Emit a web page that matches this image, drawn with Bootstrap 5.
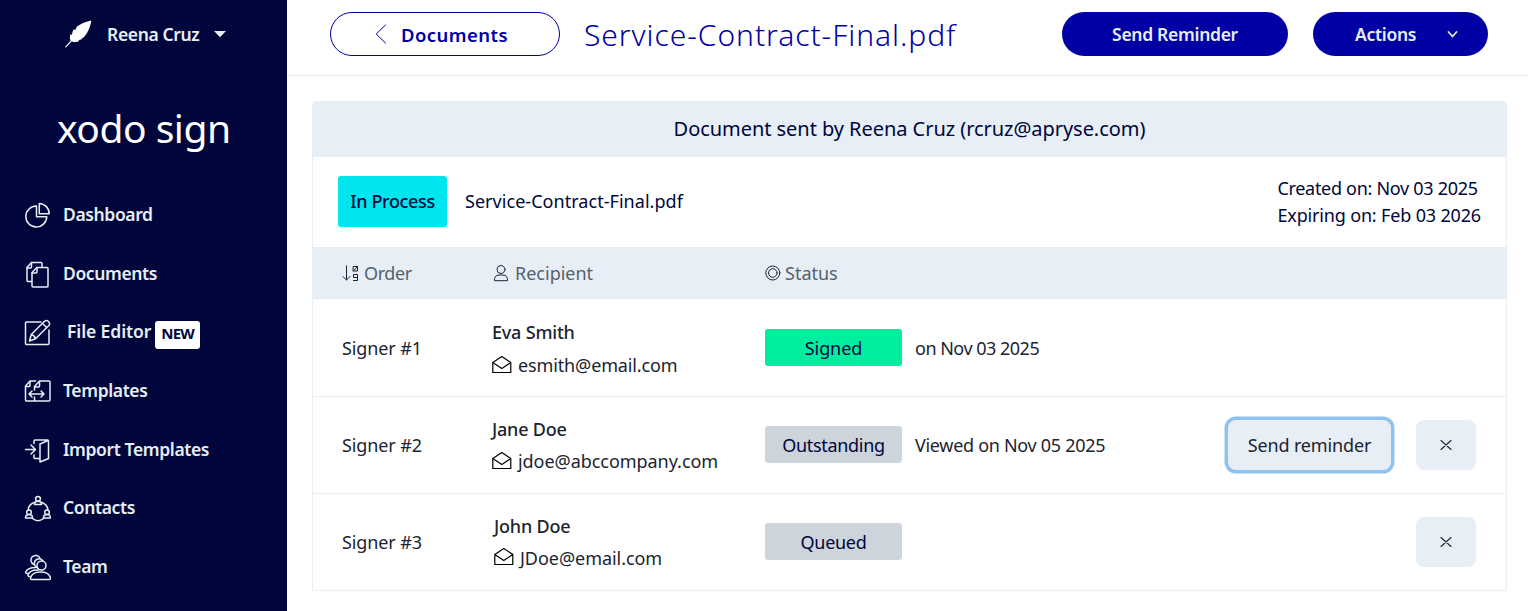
<!DOCTYPE html>
<html lang="en">
<head>
<meta charset="utf-8">
<meta name="viewport" content="width=device-width, initial-scale=1">
<title>Service-Contract-Final.pdf</title>
<link href="https://cdn.jsdelivr.net/npm/bootstrap@5.3.0/dist/css/bootstrap.min.css" rel="stylesheet">
<style>
  :root { --navy: #00063b; --ink: #0000a5; --mist: #e7eef6; }
  body { font-family: "Noto Sans", "Open Sans", sans-serif; font-size: 18px; line-height: 27px; letter-spacing: -.1px; color: #1b2430; background: #fff; white-space: nowrap; }
  svg { display: block; flex: none; fill: none; stroke: currentColor; stroke-linecap: round; stroke-linejoin: round; }
  .fw-mid { font-weight: 500; letter-spacing: -.2px; }
  .side { width: 287px; background: var(--navy); color: #e7eef6; }
  .user-row { height: 68px; padding-left: 64px; font-weight: 600; font-size: 17.5px; letter-spacing: -.36px; }
  .user-name { margin: 0 15px 0 15px; }
  .brand-name { height: 118px; font-size: 39px; line-height: 39px; letter-spacing: -.5px; padding: 40px 0 0 57px; color: #fff; }
  .side .nav-link { height: 58.7px; padding: 0 0 2px 24px; color: inherit; gap: 12px; font-weight: 600; font-size: 17.5px; letter-spacing: -.38px; }
  .side .nav-link svg { width: 27px; height: 27px; stroke-width: 1.5; position: relative; top: 1px; }
  .new-tag { width: 45px; height: 28px; font-size: 15px; line-height: 24px; letter-spacing: -.7px; border-radius: 3px; color: var(--navy); margin: 6px 0 0 -8px; }
  .topbar { height: 76px; border-bottom: 1px solid var(--mist); padding: 12px 40px 19px 43px; }
  .pill { height: 44px; border-radius: 22px; font-size: 17.5px; font-weight: 600; padding: 0; letter-spacing: -.3px; line-height: 27px; }
  .pill-main { background: var(--ink); color: #e7eef6; }
  .pill-send { width: 226px; }
  .pill-actions { width: 175px; margin-left: 25px; padding-left: 41px; }
  .pill-back { width: 230px; border: 1px solid var(--ink); color: var(--ink); font-size: 18.5px; letter-spacing: .45px; }
  .doc-title { font-size: 30px; line-height: 44px; font-weight: 300; letter-spacing: .94px; color: var(--ink); margin: 1px 0 0 24px; }
  .doc-card { margin: 25px 21px 0 25px; height: 490px; border: 1px solid var(--mist); border-radius: 4px 4px 0 0; }
  .sent { height: 55px; padding-bottom: 2px; background: var(--mist); font-size: 20px; letter-spacing: -.05px; color: var(--navy); }
  .summary { height: 90px; padding: 0 25px 1px; color: var(--navy); }
  .state { width: 109px; height: 51px; background: #00e5ee; border-radius: 3px; letter-spacing: -.35px; }
  .signer { display: grid; grid-template-columns: 150px 273px 150px 1fr auto; align-items: center; padding: 0 30px 0 29px; height: 97px; border-bottom: 1px solid var(--mist); }
  .signer:last-child { border-bottom-color: transparent; }
  .signer.first { height: 98px; padding-top: 1px; }
  .labels { height: 52px; background: var(--mist); color: #54616f; border: 0; }
  .labels svg { color: #1b2430; stroke-width: 1; }
  .pill-tag { width: 137px; height: 37px; border-radius: 3px; color: var(--navy); margin-bottom: 1px; padding-top: 1px; }
  .ok { background: #00ee9f; }
  .wait { background: #ced4dc; letter-spacing: -.3px; }
  .person { padding-top: 1px; }
  .first .person { padding-top: 2px; }
  .signer:last-child .person { padding-top: 0; }
  .person svg { width: 20px; height: 20px; color: #000; stroke-width: 1.2; position: relative; top: -1px; }
  .person .mail { margin-top: 5px; gap: 6px; letter-spacing: -.05px; }
  .first .mail { margin-top: 6px; letter-spacing: -.13px; }
  .soft { background: var(--mist); border: 0; border-radius: 8px; height: 50px; padding: 0; color: #1b2430; font-size: 18px; letter-spacing: -.13px; }
  .soft-wide { width: 163px; box-shadow: 0 0 0 3.5px #8fc3ef; margin-right: 25px; }
  .soft-x { width: 60px; padding-right: 1px; }
  .signer:last-child .soft-x { margin-bottom: 1px; }
</style>
</head>
<body>
<div class="d-flex vh-100 overflow-hidden">
  <aside class="side flex-shrink-0">
    <div class="user-row d-flex align-items-center">
      <svg width="28" height="28" viewBox="0 0 28 28" style="fill:#fff;stroke:none"><path d="M27.300 .5C26.500 7 23 14.500 19 18l-1.500.3.500 1-3 .8-.3 1.400-4.700.7-2.200-.9L2 27.600 1 27l5.600-6.200L5.800 18l.5-4 1.500 1L8.700 11.200 10 9l1 1.200L13 6.500C17 3.500 22 1.500 27.300.5Z"/></svg>
      <span class="user-name">Reena Cruz</span>
      <svg width="12" height="7" viewBox="0 0 12 7" style="fill:#e7eef6;stroke:none"><path d="M0 0h12L6 6.300Z"/></svg>
    </div>
    <div class="brand-name">xodo sign</div>
    <nav class="nav flex-column flex-nowrap">
      <a class="nav-link d-flex align-items-center"><svg viewBox="0 0 27 27"><path d="M12.500 4A10.500 10.500 0 1 0 22.800 14.800H12.500Z"/><path d="M15.300 1.500V11.800h9.900A10.200 10.200 0 0 0 15.300 1.500Z"/></svg>Dashboard</a>
      <a class="nav-link d-flex align-items-center"><svg viewBox="0 0 27 27"><path d="M7.500 20.500H4a1 1 0 0 1-1-1V6.500L7.500 1.500H17a1 1 0 0 1 1 1V6"/><path d="M3 7h3.500a1 1 0 0 0 1-1V1.500"/><path d="M13 6.500h10a1 1 0 0 1 1 1V25a1 1 0 0 1-1 1H9a1 1 0 0 1-1-1V11.500Z"/><path d="M8 12h4a1 1 0 0 0 1-1V6.500"/></svg>Documents</a>
      <a class="nav-link d-flex align-items-center"><svg viewBox="0 0 27 27"><path d="M17 3H2.500a1 1 0 0 0-1 1v20.500a1 1 0 0 0 1 1H24a1 1 0 0 0 1-1V11"/><path d="M5.500 22l1.800-6.500L20.500 2.300q2-1.500 4 .2 2 2 .3 4L11.500 19.700ZM7.300 15.500q3 .8 4.200 4.200M18.500 4.500l4.300 4.300"/></svg><span class="ps-1" style="letter-spacing:-.1px">File Editor</span><span class="new-tag bg-white fw-bold text-center">NEW</span></a>
      <a class="nav-link d-flex align-items-center"><svg viewBox="0 0 27 27"><path d="M10.500 23H2.500a1 1 0 0 1-1-1V8L6 3h5.500M1.500 8.500H5a1 1 0 0 0 1-1V3M10.500 12V8.500L15.500 3H25a1 1 0 0 1 1 1v18a1 1 0 0 1-1 1H10.500v-4M10.500 9h4a1 1 0 0 0 1-1V3M5 16h15M8 13l-3 3 3 3M17 13l3 3-3 3"/></svg>Templates</a>
      <a class="nav-link d-flex align-items-center"><svg viewBox="0 0 27 27"><path d="M1.500 12.500H11M7 8l4.500 4.500L7 17"/><path d="M10 6.500V4a1 1 0 0 1 1-1h12.500a1 1 0 0 1 1 1v17.500L16 25V7l8-3.500M10 18v2.500a1 1 0 0 0 1 1h5"/></svg>Import Templates</a>
      <a class="nav-link d-flex align-items-center"><svg viewBox="0 0 27 27"><circle cx="14" cy="3.800" r="2.400"/><path d="M10.500 9.500q0-3.300 3.500-3.300t3.500 3.300Z"/><circle cx="5" cy="17.300" r="2.300"/><path d="M1.500 23q0-3.400 3.500-3.400T8.500 23Z"/><circle cx="23" cy="17.300" r="2.300"/><path d="M19.500 23q0-3.400 3.500-3.400t3.500 3.400ZM10.500 7.300Q4.500 9.500 4.300 14.500M17.500 7.300q6 2.200 6.200 7.200M8.500 23.500q5.500 4.500 11 0"/></svg>Contacts</a>
      <a class="nav-link d-flex align-items-center"><svg viewBox="0 0 27 27"><circle cx="17.500" cy="11.500" r="4.500"/><path d="M13.500 13.800A4.700 4.700 0 1 1 19 6.800M10 10.500A4.700 4.700 0 1 1 16 4.300M7.500 25.500q-1.300 0-1-1.500 1.500-6 10-6t10 6q.3 1.500-1 1.500ZM5.500 22.500q-1.800-.3-1.500-1.500 1.700-5.300 10.500-5M3.500 19.500q-2.300-.3-1.800-1.500 2-4.500 10-4.500"/></svg>Team</a>
    </nav>
  </aside>

  <main class="flex-grow-1">
    <header class="topbar d-flex">
      <a class="btn pill pill-back d-flex align-items-center"><svg width="12" height="20" viewBox="0 0 12 20" style="margin-left:44px"><path d="M10.500 1 1.200 10l9.300 9"/></svg><span style="margin-left:14px">Documents</span></a>
      <h1 class="doc-title">Service-Contract-Final.pdf</h1>
      <button class="btn pill pill-main pill-send ms-auto">Send Reminder</button>
      <button class="btn pill pill-main pill-actions d-flex align-items-center">Actions<svg width="11" height="7" viewBox="0 0 11 7" stroke-width="1.700" style="margin-left:31px"><path d="m1.500 1 4 4.500 4-4.500"/></svg></button>
    </header>

    <section class="doc-card">
      <div class="sent d-flex align-items-center justify-content-center">Document sent by Reena Cruz (rcruz@apryse.com)</div>
      <div class="summary d-flex align-items-center">
        <span class="state fw-mid d-flex align-items-center justify-content-center">In Process</span>
        <span style="margin-left:18px;letter-spacing:.04px">Service-Contract-Final.pdf</span>
        <div class="dates ms-auto"><div style="letter-spacing:-.3px">Created on: Nov 03 2025</div><div style="letter-spacing:-.16px">Expiring on: Feb 03 2026</div></div>
      </div>
      <div class="signer labels">
        <div class="d-flex align-items-center"><svg class="me-1" width="18" height="18" viewBox="0 0 18 18"><path d="M4.500 2v14M1 12.500l3.500 3.500L8 12.500M11.500 2.500h4v4.500h-4ZM11.500 7l4-4.500M15.500 13.500h-4v-3h4v6h-4"/></svg><span style="letter-spacing:-.4px">Order</span></div>
        <div class="d-flex align-items-center"><svg width="19" height="18" viewBox="0 0 19 18" style="margin-right:4px"><circle cx="9" cy="5.500" r="4"/><path d="M2.500 16.300q-.4-5 4.500-5.300h4q4.900.3 4.500 5.300Z"/></svg><span style="letter-spacing:0">Recipient</span></div>
        <div class="d-flex align-items-center"><svg width="16" height="16" viewBox="0 0 16 16" style="margin-right:4px"><circle cx="7.800" cy="8" r="7"/><circle cx="7.800" cy="8" r="4.300"/></svg><span style="letter-spacing:0">Status</span></div>
      </div>
      <div class="signer first">
        <div>Signer #1</div>
        <div class="person"><div class="fw-mid">Eva Smith</div><div class="mail d-flex align-items-center"><svg viewBox="0 0 20 20"><path d="M.8 7.500v10h18v-10L9.800 1.500ZM.8 7.500l9 6 9-6"/></svg>esmith@email.com</div></div>
        <div><div class="pill-tag ok d-flex align-items-center justify-content-center">Signed</div></div>
        <div style="letter-spacing:-.5px">on Nov 03 2025</div>
      </div>
      <div class="signer">
        <div>Signer #2</div>
        <div class="person"><div class="fw-mid">Jane Doe</div><div class="mail d-flex align-items-center"><svg viewBox="0 0 20 20"><path d="M.8 7.500v10h18v-10L9.800 1.500ZM.8 7.500l9 6 9-6"/></svg>jdoe@abccompany.com</div></div>
        <div><div class="pill-tag wait d-flex align-items-center justify-content-center">Outstanding</div></div>
        <div style="letter-spacing:-.3px">Viewed on Nov 05 2025</div>
        <div class="d-flex"><button class="btn soft soft-wide">Send reminder</button><button class="btn soft soft-x d-flex align-items-center justify-content-center"><svg width="12" height="10" viewBox="0 0 12 10" stroke-width="1.100"><path d="m1 .5 10 9M11 .5l-10 9"/></svg></button></div>
      </div>
      <div class="signer">
        <div>Signer #3</div>
        <div class="person" style="padding-left:2px"><div class="fw-mid">John Doe</div><div class="mail d-flex align-items-center"><svg viewBox="0 0 20 20"><path d="M.8 7.500v10h18v-10L9.800 1.500ZM.8 7.500l9 6 9-6"/></svg>JDoe@email.com</div></div>
        <div><div class="pill-tag wait d-flex align-items-center justify-content-center">Queued</div></div>
        <div></div>
        <div><button class="btn soft soft-x d-flex align-items-center justify-content-center"><svg width="12" height="10" viewBox="0 0 12 10" stroke-width="1.100"><path d="m1 .5 10 9M11 .5l-10 9"/></svg></button></div>
      </div>
    </section>
  </main>
</div>
<script src="https://cdn.jsdelivr.net/npm/bootstrap@5.3.0/dist/js/bootstrap.bundle.min.js"></script>
</body>
</html>
